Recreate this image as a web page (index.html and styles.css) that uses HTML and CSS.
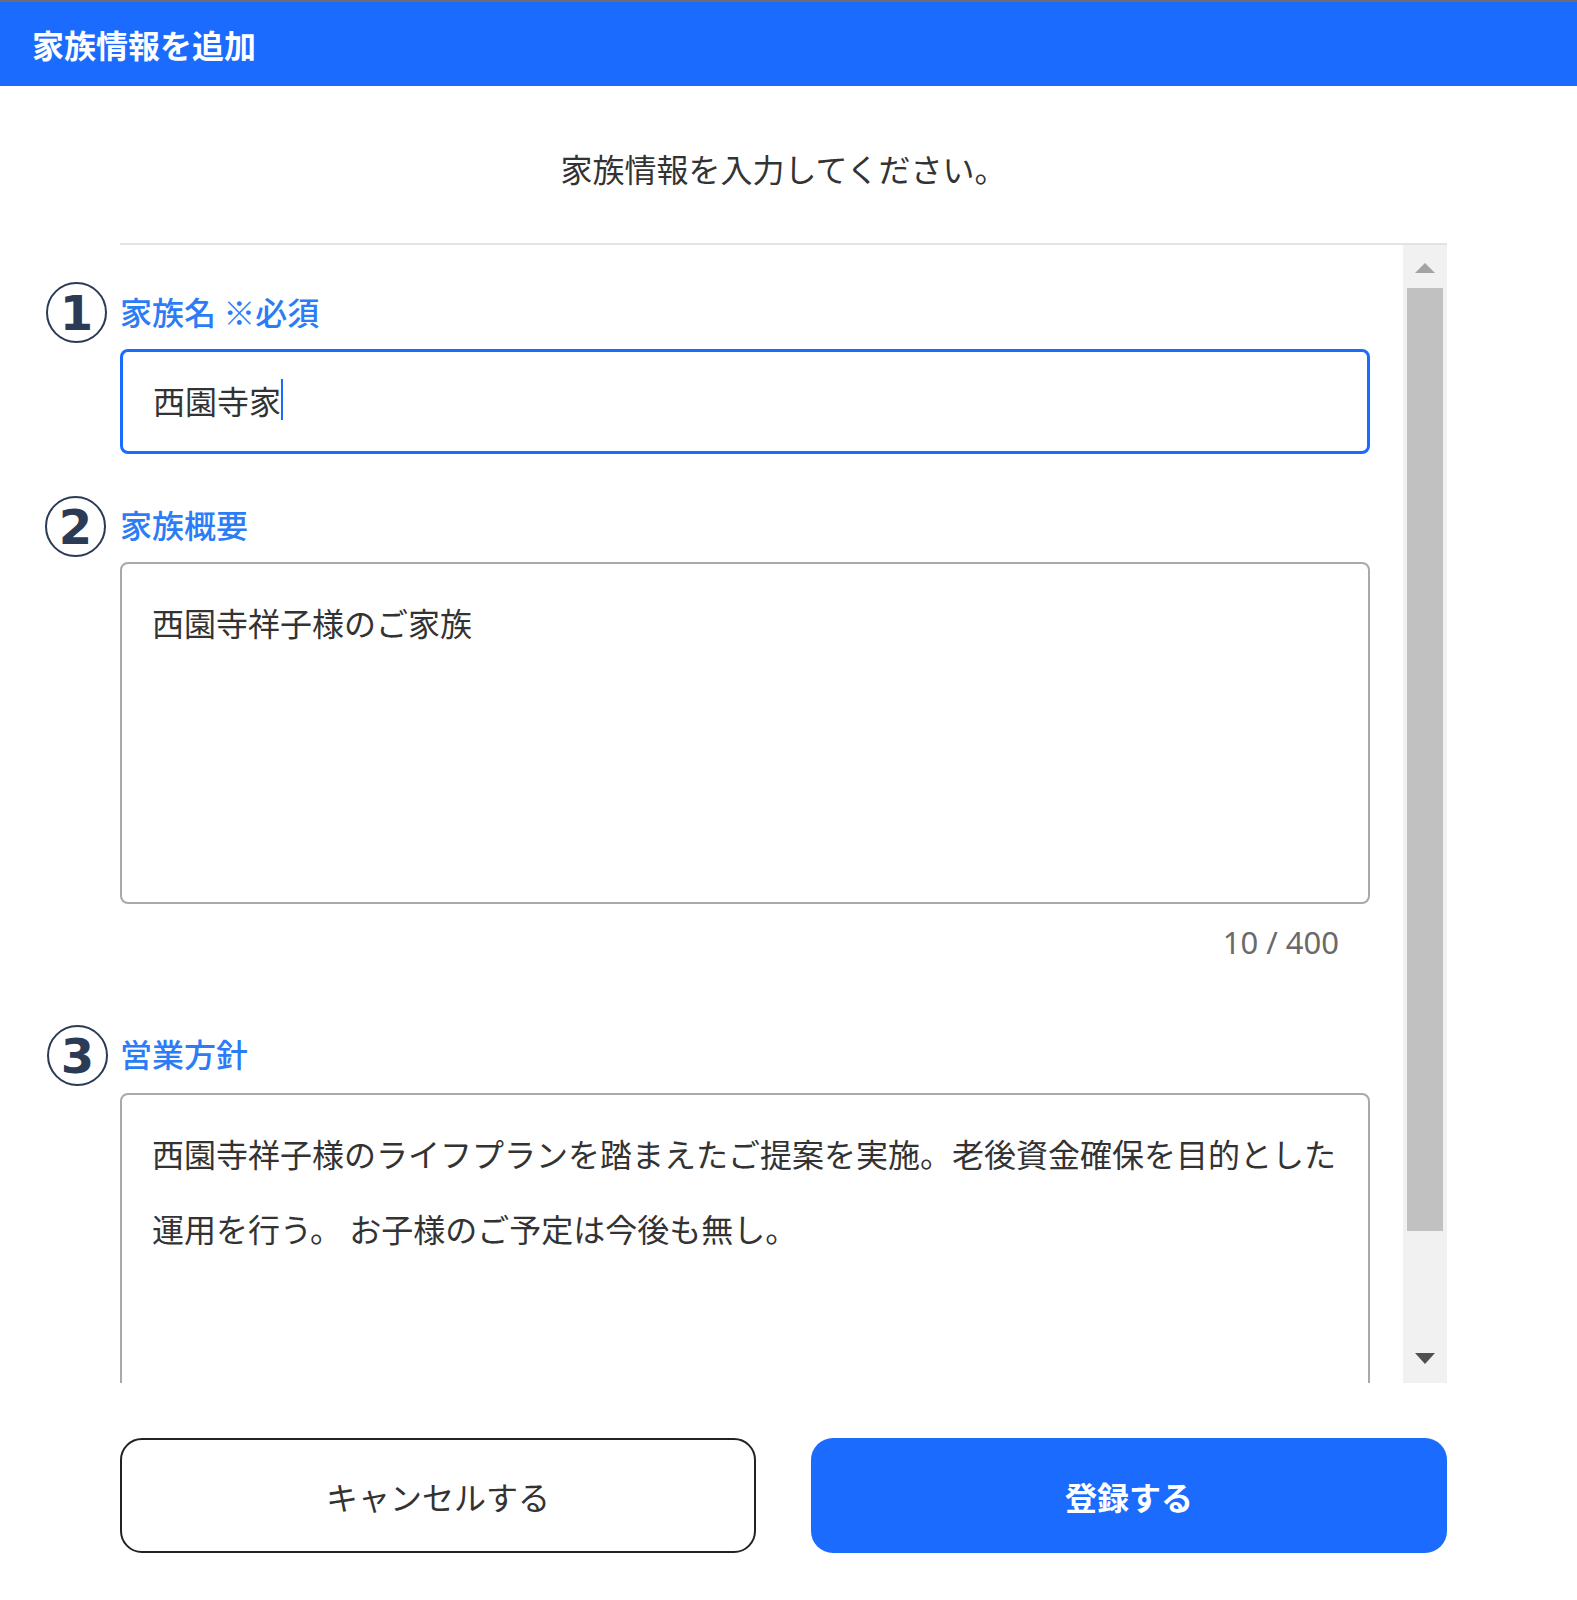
FILE: index.html
```html
<!DOCTYPE html>
<html lang="ja">
<head>
  <meta charset="UTF-8">
  <title>家族情報を追加</title>
  <link rel="stylesheet" href="styles.css">
</head>
<body>

  <header class="topbar">
    <h1>家族情報を追加</h1>
  </header>

  <main class="dialog">
    <p class="lead">家族情報を入力してください。</p>

    <div class="scroll-box">
      <div class="scroll-content">
        <section class="field">
          <div class="field-label">家族名 ※必須</div>
          <div class="input is-focused">西園寺家<span class="caret"></span></div>
        </section>

        <section class="field">
          <div class="field-label">家族概要</div>
          <div class="textarea">西園寺祥子様のご家族</div>
          <div class="counter">10 / 400</div>
        </section>

        <section class="field field-policy">
          <div class="field-label">営業方針</div>
          <div class="textarea">西園寺祥子様のライフプランを踏まえたご提案を実施。老後資金確保を目的とした運用を行う。 お子様のご予定は今後も無し。</div>
        </section>
      </div>

      <div class="scrollbar">
        <svg class="arrow arrow-up" width="20" height="10" viewBox="0 0 20 10"><polygon points="10,0 20,10 0,10"/></svg>
        <div class="thumb"></div>
        <svg class="arrow arrow-down" width="20" height="11" viewBox="0 0 20 11"><polygon points="0,0 20,0 10,11"/></svg>
      </div>
    </div>

    <div class="actions">
      <button class="btn btn-cancel">キャンセルする</button>
      <button class="btn btn-primary">登録する</button>
    </div>

    <!-- 注釈の番号 -->
    <span class="marker marker-1">1</span>
    <span class="marker marker-2">2</span>
    <span class="marker marker-3">3</span>
  </main>

</body>
</html>
```

FILE: styles.css
```css
body {
  margin: 0;
  font-family: "Noto Sans CJK JP", sans-serif;
  color: #333;
  background: #fff;
}

.topbar {
  height: 84px;
  border-top: 2px solid #6e6e6e;
  background: #1b6bff;
  display: flex;
  align-items: center;
  padding-left: 32px;
}

.topbar h1 {
  margin: 0;
  font-size: 32px;
  font-weight: 700;
  color: #fff;
  line-height: 40px;
}

.dialog {
  position: relative;
  width: 1327px;
  margin-left: 120px;
  padding-top: 62px;
}

.lead {
  margin: 0 0 55px;
  font-size: 32px;
  line-height: 40px;
  text-align: center;
}

.scroll-box {
  display: flex;
  height: 1138px;
  border-top: 2px solid #e3e3e3;
}

.scroll-content {
  flex: 1;
  overflow: hidden;
  padding-right: 33px;
}

.field {
  display: flex;
  flex-direction: column;
}

.field:first-child {
  margin-top: 46px;
}

.field + .field {
  margin-top: 50px;
}

.field-policy {
  margin-top: 71px !important;
}

.field-label {
  font-size: 32px;
  font-weight: 500;
  line-height: 40px;
  color: #2b7cf6;
  margin-bottom: 18px;
}

.field-policy .field-label {
  margin-bottom: 20px;
}

.input {
  box-sizing: border-box;
  height: 105px;
  border: 2px solid #a9a9a9;
  border-radius: 8px;
  padding-left: 30px;
  padding-bottom: 4px;
  display: flex;
  align-items: center;
  font-size: 32px;
}

.input.is-focused {
  border: 3px solid #1b6bff;
}

.caret {
  display: inline-block;
  width: 2px;
  height: 41px;
  background: #1b6bff;
}

.textarea {
  box-sizing: border-box;
  height: 342px;
  flex-shrink: 0;
  border: 2px solid #a9a9a9;
  border-radius: 8px;
  padding: 21px 30px;
  font-size: 32px;
  line-height: 75px;
}

.counter {
  margin-top: 18px;
  padding-right: 31px;
  text-align: right;
  font-family: "Noto Sans", sans-serif;
  font-size: 31px;
  line-height: 40px;
  color: #6a6a6a;
}

.scrollbar {
  width: 44px;
  background: #f1f1f1;
  display: flex;
  flex-direction: column;
  align-items: center;
  padding: 18px 0 19px;
  box-sizing: border-box;
}

.arrow-up {
  fill: #a3a3a3;
}

.arrow-down {
  fill: #505050;
  margin-top: auto;
}

.thumb {
  width: 36px;
  height: 943px;
  margin-top: 15px;
  background: #c1c1c1;
}

.actions {
  display: grid;
  grid-template-columns: 1fr 1fr;
  gap: 55px;
  margin-top: 55px;
}

.btn {
  height: 115px;
  border-radius: 22px;
  font-family: "Noto Sans CJK JP", sans-serif;
  font-size: 32px;
  cursor: pointer;
}

.btn-cancel {
  background: #fff;
  border: 2px solid #222;
  color: #333;
}

.btn-primary {
  background: #1b6bff;
  border: none;
  color: #fff;
  font-weight: 700;
}

.marker {
  position: absolute;
  box-sizing: border-box;
  width: 61px;
  height: 61px;
  border: 2px solid #2b3a55;
  border-radius: 50%;
  display: flex;
  align-items: center;
  justify-content: center;
  font-family: "DejaVu Sans", sans-serif;
  font-weight: 700;
  font-size: 48px;
  color: #2b3a55;
  line-height: 1;
}

.marker-1 {
  left: -74px;
  top: 196px;
}

.marker-2 {
  left: -75px;
  top: 410px;
}

.marker-3 {
  left: -73px;
  top: 939px;
}
```
